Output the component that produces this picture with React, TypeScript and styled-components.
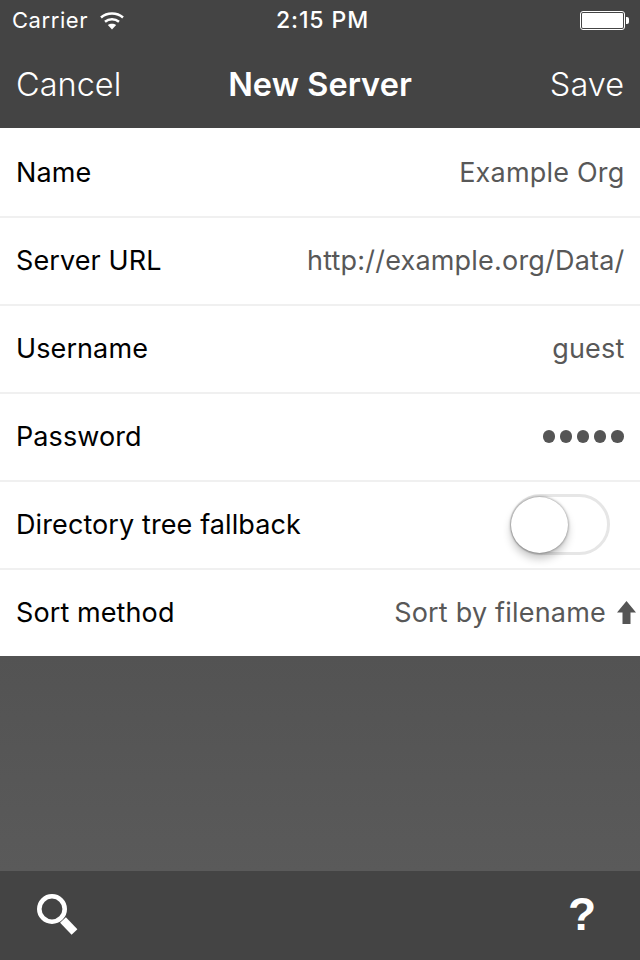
import React from "react";
import styled, { createGlobalStyle } from "styled-components";

const Global = createGlobalStyle`
  html, body {
    margin: 0;
    padding: 0;
    background: #565656;
  }
  * {
    box-sizing: border-box;
  }
`;

const Screen = styled.div`
  display: flex;
  flex-direction: column;
  width: 640px;
  height: 960px;
  overflow: hidden;
  font-family: Inter, "Liberation Sans", sans-serif;
  background: #565656;
`;

const Top = styled.header`
  height: 128px;
  background: #444444;
  color: #fff;
  display: flex;
  flex-direction: column;
  flex-shrink: 0;
`;

const StatusBar = styled.div`
  display: grid;
  grid-template-columns: 1fr auto 1fr;
  align-items: center;
  height: 40px;
  padding: 0 11px 0 12px;
  font-size: 22px;
`;

const Carrier = styled.div`
  display: flex;
  align-items: center;
  gap: 12px;
  letter-spacing: 0.55px;
`;

const Clock = styled.div`
  font-size: 23px;
  font-weight: 500;
  letter-spacing: 0.9px;
  margin-left: 4px;
`;

const Battery = styled.div`
  justify-self: end;
  display: flex;
  align-items: center;
`;

const BatteryBody = styled.div`
  width: 45px;
  height: 19px;
  border: 1px solid #fff;
  border-radius: 3px;
  padding: 1px;
  &::after {
    content: "";
    display: block;
    height: 100%;
    background: #fff;
    border-radius: 1px;
  }
`;

const BatteryCap = styled.div`
  width: 3px;
  height: 7px;
  background: #fff;
  margin-left: 1px;
  border-radius: 0 2px 2px 0;
`;

const NavBar = styled.div`
  flex: 1;
  display: grid;
  grid-template-columns: 1fr auto 1fr;
  align-items: center;
  padding: 0 16px;
  font-size: 32.5px;
`;

const NavButton = styled.div<{ $right?: boolean }>`
  font-weight: 300;
  text-align: ${(p) => (p.$right ? "right" : "left")};
`;

const NavTitle = styled.div`
  font-weight: 600;
  letter-spacing: 0.05px;
`;

const Form = styled.div`
  background: #fff;
  flex-shrink: 0;
`;

const Row = styled.div<{ $first?: boolean }>`
  display: flex;
  align-items: center;
  justify-content: space-between;
  height: 88px;
  padding: 0 15.5px 0 16px;
  box-shadow: ${(p) => (p.$first ? "none" : "inset 0 2px 0 #f0f0f0")};
  font-size: 27px;
`;

const Label = styled.div`
  color: #000;
  letter-spacing: 0.1px;
`;

const Value = styled.div`
  color: #585858;
  display: flex;
  align-items: center;
  gap: 11px;
  letter-spacing: 0.2px;
`;

const Dots = styled.div`
  display: flex;
  gap: 4.6px;
  margin: 1px 1px 0 0;
`;

const Dot = styled.span`
  width: 12.5px;
  height: 12.5px;
  border-radius: 50%;
  background: #555;
`;

const SwitchTrack = styled.div`
  position: relative;
  width: 100px;
  height: 61px;
  margin-right: 14.5px;
  border: 3px solid #e6e6e6;
  border-radius: 31px;
  background: #fff;
`;

const SwitchKnob = styled.div`
  position: absolute;
  left: -2px;
  top: 0;
  width: 57px;
  height: 56px;
  border-radius: 50%;
  background: #fff;
  box-shadow: 0 6px 8px rgba(0, 0, 0, 0.22), 0 0 3px rgba(0, 0, 0, 0.5);
`;

const Spacer = styled.div`
  flex: 1;
  background: linear-gradient(#535353, #5a5a5a);
`;

const Footer = styled.footer`
  height: 89px;
  flex-shrink: 0;
  background: #444444;
  display: flex;
  align-items: center;
  justify-content: space-between;
  padding: 0 44px 0 37px;
  color: #fff;
`;

const Help = styled.div`
  font-family: "Liberation Sans", sans-serif;
  font-weight: 700;
  font-size: 46px;
  line-height: 1;
  margin-bottom: 4px;
`;

const ArrowSvg = styled.svg`
  margin-right: -11.5px;
`;

const SearchSvg = styled.svg`
  margin-bottom: 1px;
`;

const Wifi = () => (
  <svg width="24" height="19" viewBox="0 0 24 19" fill="none" stroke="#fff" strokeWidth="2.5">
    <path d="M1 6.5C7 1.2 17 1.2 23 6.5" />
    <path d="M5 10.7C9 7.4 15 7.4 19 10.7" />
    <path d="M12 18.5L7.8 14C10.2 12.2 13.8 12.2 16.2 14Z" fill="#fff" stroke="none" />
  </svg>
);

const SortArrow = () => (
  <ArrowSvg width="19" height="23" viewBox="0 0 19 23" fill="#555">
    <path d="M9.5 0L19 11.5H13.5V23H5.5V11.5H0Z" />
  </ArrowSvg>
);

const SearchIcon = () => (
  <SearchSvg width="42" height="42" viewBox="0 0 42 42" fill="none" stroke="#fff">
    <circle cx="15" cy="15" r="12.7" strokeWidth="4.6" />
    <path d="M26 26L37.5 38" strokeWidth="8" />
  </SearchSvg>
);

export default function App() {
  return (
    <Screen>
      <Global />
      <Top>
        <StatusBar>
          <Carrier>
            Carrier
            <Wifi />
          </Carrier>
          <Clock>2:15 PM</Clock>
          <Battery>
            <BatteryBody />
            <BatteryCap />
          </Battery>
        </StatusBar>
        <NavBar>
          <NavButton>Cancel</NavButton>
          <NavTitle>New Server</NavTitle>
          <NavButton $right>Save</NavButton>
        </NavBar>
      </Top>
      <Form>
        <Row $first>
          <Label>Name</Label>
          <Value>Example Org</Value>
        </Row>
        <Row>
          <Label>Server URL</Label>
          <Value>http://example.org/Data/</Value>
        </Row>
        <Row>
          <Label>Username</Label>
          <Value>guest</Value>
        </Row>
        <Row>
          <Label>Password</Label>
          <Dots>
            <Dot />
            <Dot />
            <Dot />
            <Dot />
            <Dot />
          </Dots>
        </Row>
        <Row>
          <Label>Directory tree fallback</Label>
          <SwitchTrack>
            <SwitchKnob />
          </SwitchTrack>
        </Row>
        <Row>
          <Label>Sort method</Label>
          <Value>
            Sort by filename
            <SortArrow />
          </Value>
        </Row>
      </Form>
      <Spacer />
      <Footer>
        <SearchIcon />
        <Help>?</Help>
      </Footer>
    </Screen>
  );
}
